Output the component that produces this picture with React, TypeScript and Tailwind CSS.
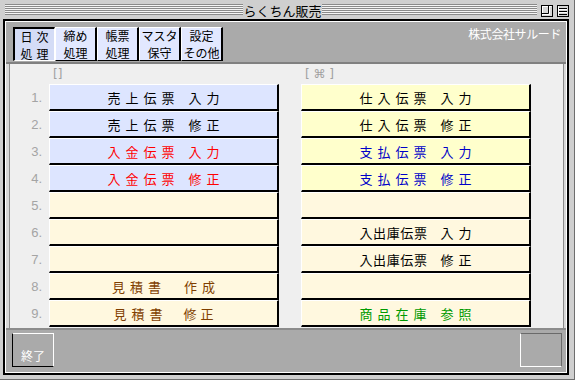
import React from "react";

type Group = { t: string; cls: string };
type Row = { bg: string; color: string; groups: Group[]; pad: string };

const JP = "font-['Noto_Sans_CJK_JP',sans-serif]";

const BLUE = "bg-[#dde5ff]";
const YEL = "bg-[#ffffcc]";
const CREAM = "bg-[#fff8df]";

const std = (a: string, b: string): Group[] => [
  { t: a, cls: "tracking-[5px]" },
  { t: b, cls: "tracking-[5px] ml-[9px]" },
];

const leftRows: Row[] = [
  { bg: BLUE, color: "text-black", groups: std("売上伝票", "入力"), pad: "pl-[5px]" },
  { bg: BLUE, color: "text-black", groups: std("売上伝票", "修正"), pad: "pl-[5px]" },
  { bg: BLUE, color: "text-[#ff0000]", groups: std("入金伝票", "入力"), pad: "pl-[5px]" },
  { bg: BLUE, color: "text-[#ff0000]", groups: std("入金伝票", "修正"), pad: "pl-[5px]" },
  { bg: CREAM, color: "text-black", groups: [], pad: "" },
  { bg: CREAM, color: "text-black", groups: [], pad: "" },
  { bg: CREAM, color: "text-black", groups: [], pad: "" },
  {
    bg: CREAM,
    color: "text-[#7f3f00]",
    groups: [
      { t: "見積書", cls: "tracking-[5px]" },
      { t: "作成", cls: "tracking-[5px] ml-[18px]" },
    ],
    pad: "pl-[5px]",
  },
  {
    bg: CREAM,
    color: "text-[#7f3f00]",
    groups: [
      { t: "見積書", cls: "tracking-[5px]" },
      { t: "修正", cls: "tracking-[4px] ml-[16px]" },
    ],
    pad: "pl-[4px]",
  },
];

const rightRows: Row[] = [
  { bg: YEL, color: "text-black", groups: std("仕入伝票", "入力"), pad: "pl-[5px]" },
  { bg: YEL, color: "text-black", groups: std("仕入伝票", "修正"), pad: "pl-[5px]" },
  { bg: YEL, color: "text-[#0000c8]", groups: std("支払伝票", "入力"), pad: "pl-[5px]" },
  { bg: YEL, color: "text-[#0000c8]", groups: std("支払伝票", "修正"), pad: "pl-[5px]" },
  { bg: CREAM, color: "text-black", groups: [], pad: "" },
  {
    bg: CREAM,
    color: "text-black",
    groups: [
      { t: "入出庫伝票", cls: "tracking-[0.6px]" },
      { t: "入力", cls: "tracking-[5px] ml-[13px]" },
    ],
    pad: "pl-[5px]",
  },
  {
    bg: CREAM,
    color: "text-black",
    groups: [
      { t: "入出庫伝票", cls: "tracking-[0.6px]" },
      { t: "修正", cls: "tracking-[5px] ml-[13px]" },
    ],
    pad: "pl-[5px]",
  },
  { bg: CREAM, color: "text-black", groups: [], pad: "" },
  { bg: CREAM, color: "text-[#009a00]", groups: std("商品在庫", "参照"), pad: "pl-[5px]" },
];

function Btn({ row }: { row: Row }) {
  return (
    <div
      className={`h-[27px] w-[230px] border-t border-l border-t-white border-l-white border-b-2 border-r-2 border-b-black border-r-black flex items-center justify-center text-[13px] leading-none ${JP} ${row.bg} ${row.color}`}
    >
      <span className={`flex items-center ${row.pad}`}>
        {row.groups.map((g, i) => (
          <span key={i} className={g.cls}>
            {g.t}
          </span>
        ))}
      </span>
    </div>
  );
}

const Stripes = ({ w }: { w: string }) => (
  <div
    className={`${w} h-[11px] mt-[4px] bg-[repeating-linear-gradient(to_bottom,#8a8a8a_0px,#8a8a8a_1px,#f4f4f4_1px,#f4f4f4_2px)]`}
  />
);

const tabs = [
  ["日次", "処理"],
  ["締め", "処理"],
  ["帳票", "処理"],
  ["マスタ", "保守"],
  ["設定", "その他"],
];

export default function App() {
  return (
    <div className={`w-[575px] h-[380px] bg-[#cfcfcf] border-r border-b border-[#6e6e6e] overflow-hidden ${JP}`}>
      {/* Title bar */}
      <div className="h-[19px] flex items-start">
        <div className="ml-[5px]">
          <Stripes w="w-[238px]" />
        </div>
        <div className="w-[79px] h-[19px] flex items-center justify-center text-[13px] text-black leading-none pt-[1px]">
          らくちん販売
        </div>
        <Stripes w="w-[215px]" />
        <svg width="12" height="12" viewBox="0 0 12 12" className="ml-[4px] mt-[5px]">
          <rect x="0.5" y="0.5" width="11" height="11" fill="#d6d6d6" stroke="#000" />
          <path d="M1 1.5H10.5M1.5 1V10.5" stroke="#fff" />
          <path d="M7.5 1V8.5H1" stroke="#000" fill="none" />
          <path d="M8.5 2V9.5H2" stroke="#fff" fill="none" />
        </svg>
        <svg width="12" height="12" viewBox="0 0 12 12" className="ml-[4px] mt-[5px]">
          <rect x="0.5" y="0.5" width="11" height="11" fill="#d6d6d6" stroke="#000" />
          <path d="M1.5 1V10.5" stroke="#fff" />
          <path d="M2 3.5H10M2 6.5H10M2 9.5H10" stroke="#000" />
          <path d="M2 4.5H10M2 7.5H10" stroke="#fff" />
        </svg>
      </div>

      {/* Body frame */}
      <div className="ml-[3px] w-[566px] h-[356px] border-2 border-black">
        <div className="h-full w-full border border-white flex flex-col">
          {/* Toolbar */}
          <div className="h-[42px] shrink-0 bg-[#aaaaaa] border-b-2 border-[#808080] flex items-start justify-between pl-[7px] pr-[5px] pt-[5px]">
            <div className="flex">
              {tabs.map((t, i) =>
                i === 0 ? (
                  <div
                    key={i}
                    className="w-[42px] h-[34px] bg-[#d4dcf6] border-t-2 border-l-2 border-t-black border-l-black border-b border-r border-b-white border-r-white flex flex-col items-center justify-center text-[12px] leading-[17px] text-black"
                  >
                    <span className="tracking-[4px] pl-[4px]">{t[0]}</span>
                    <span className="tracking-[4px] pl-[4px]">{t[1]}</span>
                  </div>
                ) : (
                  <div
                    key={i}
                    className="w-[42px] h-[34px] bg-[#e2e8ff] border-t border-l border-t-white border-l-white border-b border-r-2 border-b-black border-r-black flex flex-col items-center justify-center text-[12px] leading-[17px] text-black"
                  >
                    <span>{t[0]}</span>
                    <span>{t[1]}</span>
                  </div>
                )
              )}
            </div>
            <div className="text-[12px] tracking-[-0.4px] text-white leading-none mt-[1px]">株式会社サルード</div>
          </div>

          {/* Middle content */}
          <div className="h-[264px] shrink-0 bg-[#d8d8d8] pl-[3px] pr-[2px]">
            <div className="h-full border-x border-[#8c8c8c] bg-[#efefef] flex flex-col">
              <div className="h-[20px] flex items-end text-[12px] leading-[16px] text-[#a0a0a0] font-['DejaVu_Sans',sans-serif] pb-[2px]">
                <div className="w-[39px]" />
                <div className="w-[230px] pl-[4px]">[]</div>
                <div className="w-[22px]" />
                <div className="w-[230px] pl-[4px]">[ ⌘ ]</div>
              </div>
              {leftRows.map((r, i) => (
                <div key={i} className="flex h-[27px]">
                  <div className="w-[39px] pr-[7px] text-right text-[13px] leading-[27px] text-[#a4a4a4] font-['Liberation_Sans',sans-serif]">
                    {i + 1}.
                  </div>
                  <Btn row={r} />
                  <div className="w-[22px]" />
                  <Btn row={rightRows[i]} />
                </div>
              ))}
            </div>
          </div>

          {/* Bottom bar */}
          <div className="h-[44px] shrink-0 bg-[#aaaaaa] border-t-2 border-[#8c8c8c] flex items-start justify-between pl-[6px] pr-[4px] pt-[3px]">
            <div className="w-[42px] h-[34px] border-t border-r border-t-white border-r-white border-l border-b border-l-black border-b-black flex items-end justify-center pb-[2px] text-[12px] leading-[16px] text-white">
              終了
            </div>
            <div className="w-[42px] h-[34px] border-t border-r border-t-[#6a6a6a] border-r-[#6a6a6a] border-l border-b border-l-white border-b-white" />
          </div>
        </div>
      </div>
    </div>
  );
}
